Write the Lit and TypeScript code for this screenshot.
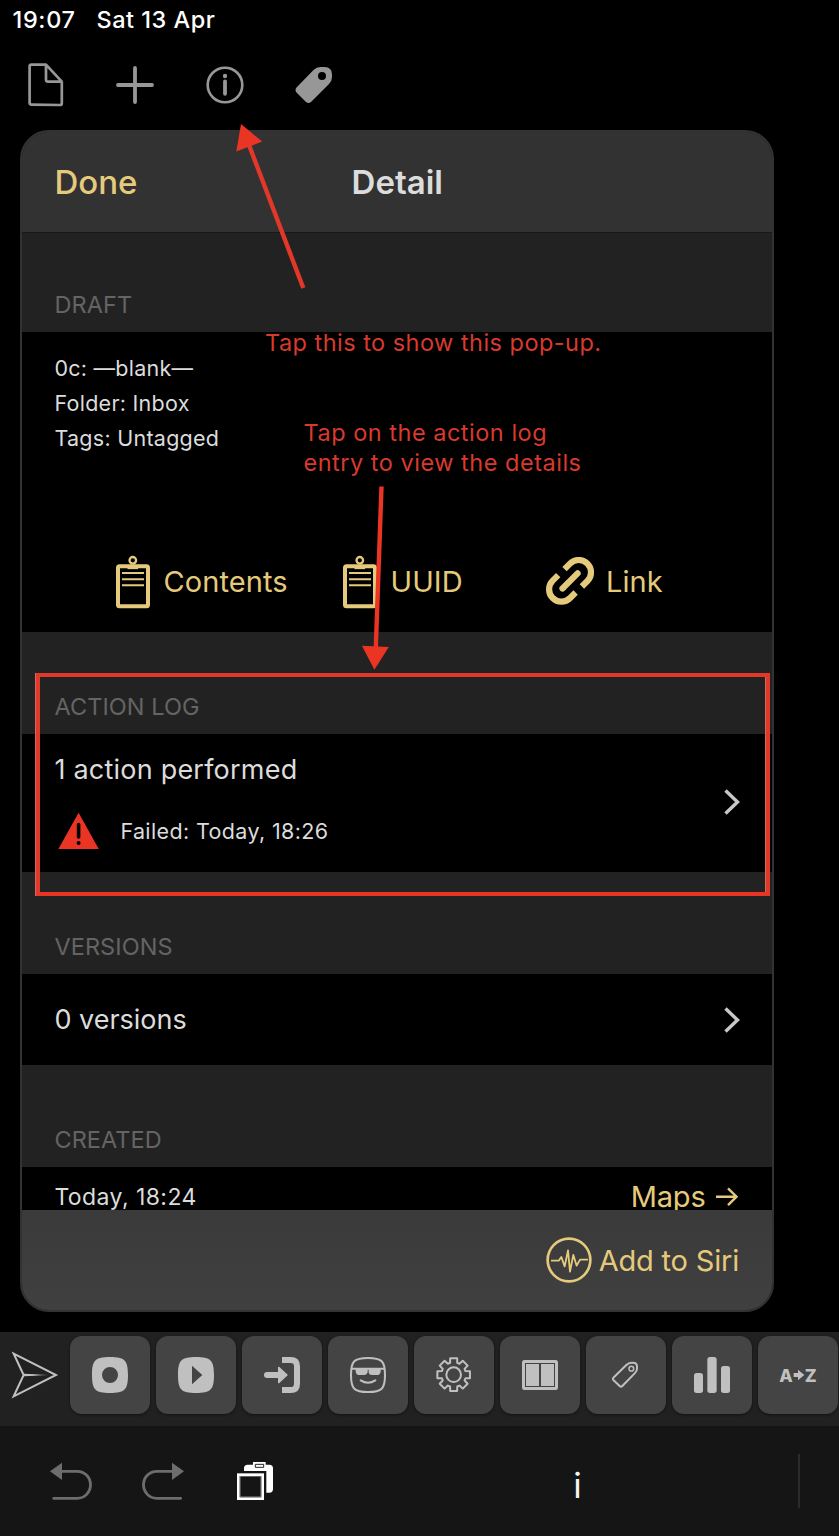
import { LitElement, html, css, svg } from "lit";
import { customElement } from "lit/decorators.js";

const SQUIRCLE = "M0-54C44-54 54-44 54 0S44 54 0 54-54 44-54 0-44-54 0-54Z";

function gearPath(): string {
  const pts: string[] = [];
  for (let i = 0; i < 8; i++) {
    const mid = i * 45 - 90;
    const corners: [number, number][] = [[37, -17], [50, -12], [50, 12], [37, 17]];
    for (const [r, off] of corners) {
      const a = ((mid + off) * Math.PI) / 180;
      pts.push(`${(r * Math.cos(a)).toFixed(1)} ${(r * Math.sin(a)).toFixed(1)}`);
    }
  }
  return "M" + pts.join("L") + "Z";
}

const clipboard = html`<svg class="clip" width="34" height="54" viewBox="116 554.700 34 54" fill="none" stroke="currentColor">
  <rect x="118" y="566" width="30" height="40" rx="1.5" stroke-width="4"></rect>
  <circle cx="132.8" cy="560" r="3.3" stroke-width="2.3"></circle>
  <path d="M127.5 567.6h10.600" stroke-width="2.500"></path>
  <path d="M122 572.8h22M122 579h22M122 585h22" stroke-width="2"></path>
</svg>`;

const chevron = html`<svg class="chev" width="18" height="30" viewBox="723 787 18 30" fill="none" stroke="#c8c8c8" stroke-width="3.4">
  <path d="M725.5 790.5l12 11.500-12 11.500"></path>
</svg>`;

const actionIcons = [
  svg`<path d="${SQUIRCLE}M0-24A24 24 0 1 0 0 24 24 24 0 1 0 0-24Z" fill="currentColor" fill-rule="evenodd"></path>`,
  svg`<path d="${SQUIRCLE}M-12-28V28L19 0Z" fill="currentColor" fill-rule="evenodd"></path>`,
  svg`<path d="M0-45H26Q45-45 45-26V26Q45 45 26 45H0" fill="none" stroke="currentColor" stroke-width="18"></path>
      <path d="M-45 0H-10" stroke="currentColor" stroke-width="18" stroke-linecap="round"></path>
      <path d="M-10-23L15 0-10 23Z" fill="currentColor" stroke="currentColor" stroke-width="4" stroke-linejoin="round"></path>`,
  svg`<path d="${SQUIRCLE}" transform="scale(.945)" fill="none" stroke="currentColor" stroke-width="6.5"></path>
      <path d="M-49-19H49" stroke="currentColor" stroke-width="6"></path>
      <path d="M-37-21H-1V-8Q-3 0-10 0H-26Q-35 0-37-10ZM2-21H38V-10Q36 0 27 0H11Q3 0 2-8Z" fill="currentColor"></path>
      <path d="M-22 16Q0 30 22 16" fill="none" stroke="currentColor" stroke-width="6" stroke-linecap="round"></path>`,
  svg`<g transform="translate(-1 -1)" fill="none" stroke="currentColor" stroke-width="6" stroke-linejoin="round">
      <path d="${gearPath()}"></path><circle r="22"></circle></g>`,
  svg`<rect x="-49.500" y="-40.500" width="99" height="81" rx="3" fill="none" stroke="currentColor" stroke-width="9"></rect>
      <path d="M-42-33H-3V33H-42ZM3-33H42V33H3Z" fill="currentColor"></path>`,
  svg`<g fill="none" stroke="currentColor" stroke-width="6" stroke-linejoin="round">
      <path d="M-38 8L1-30Q8-37 16-37H21Q33-37 33-25V-19Q33-12 26-5L-11 33Q-15 37-19 33L-38 15Q-41 11-38 8Z"></path>
      <circle cx="16" cy="-19" r="7" stroke-width="4.500"></circle></g>`,
  svg`<g fill="currentColor"><rect x="-54" y="-6" width="27" height="60" rx="8"></rect>
      <rect x="-14" y="-54" width="28" height="108" rx="8"></rect><rect x="27" y="-27" width="27" height="81" rx="8"></rect></g>`,
];

@customElement("app-root")
export class AppRoot extends LitElement {
  static styles = css`
    :host {
      display: block;
      position: relative;
      width: 839px;
      height: 1536px;
      overflow: hidden;
      background: #000;
      color: #dcdcdc;
      font-family: Inter, "Liberation Sans", sans-serif;
      white-space: nowrap;
    }
    * { box-sizing: border-box; }
    svg { display: block; flex: none; }
    .page { display: flex; flex-direction: column; height: 100%; }
    .status {
      height: 40px; padding-left: 12.5px; display: flex; gap: 21px;
      color: #fff; font-size: 23.5px; line-height: 40px; font-weight: 500;
    }
    .time { letter-spacing: 0.65px; }
    .date { letter-spacing: 0.5px; }
    .tools { height: 90px; display: flex; color: #979797; padding-top: 20px; }
    .panel {
      margin-left: 20px; width: 754px; height: 1182px;
      border: 2px solid #323232; border-radius: 29px; overflow: hidden;
      display: flex; flex-direction: column; background: #222;
    }
    .head {
      height: 101px; flex: none; background: #323232; border-bottom: 1px solid #191919;
      display: grid; grid-template-columns: 1fr auto 1fr; align-items: center;
      padding: 0 32px 0 32.5px; font-size: 33px; line-height: 40px; font-weight: 600;
    }
    .gold { color: #e5ca7c; }
    .done { font-weight: 550; }
    .caption {
      height: 102px; flex: none; display: flex; align-items: flex-end; padding: 0 32.4px 12px;
      color: #646464; font-size: 23.5px; line-height: 30px; letter-spacing: 0.08px;
    }
    .caption.first { height: 99px; }
    .block { background: #000; flex: none; }
    .draft { height: 300px; padding-top: 19px; display: flex; flex-direction: column; }
    .meta { padding-left: 32.4px; font-size: 21.5px; line-height: 35px; letter-spacing: 0.27px; }
    .links {
      margin-top: 95px; padding-left: 94px; display: grid; height: 62px;
      grid-template-columns: 227px 203px auto; justify-content: start; align-items: center;
      font-size: 29px; line-height: 40px; letter-spacing: 0.1px;
    }
    .link { display: flex; align-items: center; gap: 13.5px; }
    .link.wide { gap: 12px; }
    .log { height: 138px; padding: 0 31px 0 32.4px; display: flex; justify-content: space-between; align-items: flex-start; }
    .log .entry { padding-top: 18px; }
    .log .chev { margin-top: 53px; }
    .title { font-size: 27px; line-height: 36px; letter-spacing: 0.22px; }
    .title.short { letter-spacing: 0; }
    .fail { display: flex; align-items: center; gap: 21px; margin-top: 24px; padding-left: 4px; font-size: 21.5px; line-height: 38px; letter-spacing: 0.37px; }
    .row { height: 91px; padding: 0 31px 0 32.4px; display: flex; justify-content: space-between; align-items: center; }
    .created { height: 43px; padding: 9px 34px 0 32.4px; display: flex; justify-content: space-between; overflow: hidden; line-height: 40px; }
    .when { font-size: 23px; letter-spacing: 0.43px; line-height: 42px; }
    .maps { display: flex; gap: 9.5px; font-size: 29px; align-items: center; height: 42px; letter-spacing: -0.2px; }
    .foot {
      flex: 1; background: linear-gradient(#3a3a3a, #404040); display: flex; justify-content: flex-end;
      align-items: center; gap: 7px; padding-right: 33px; font-size: 29px; line-height: 40px; letter-spacing: -0.2px;
    }
    .siri { padding-top: 2px; }
    .actions {
      margin-top: 20px; height: 94px; flex: none; background: #212121; display: flex; gap: 6px;
      padding: 4px 0 0 0; color: #c0c0c0;
    }
    .send { width: 64px; height: 78px; }
    .key {
      width: 80px; height: 78px; flex: none; border-radius: 12px; background: #444;
      box-shadow: 0 1px 3px rgba(0, 0, 0, 0.5); display: flex; align-items: center; justify-content: center;
      font-size: 17.5px; font-weight: 800; gap: 0;
    }
    .bottom { flex: 1; background: #151515; display: flex; color: #6d6d6d; align-items: flex-start; }
    .info { width: 20px; margin-left: 287.5px; color: #f4f4f4; font-size: 35px; line-height: 60px; margin-top: 29px; text-align: center; }
    .divider { width: 2px; height: 54px; margin: 28px 0 0 210.5px; background: #2b2b2b; }
    .marks { position: absolute; inset: 0; }
    .note { position: absolute; color: #d83a2d; font-size: 23.500px; line-height: 30px; }
    .note-a { left: 265px; top: 327.500px; letter-spacing: 0.47px; }
    .note-b { left: 303.500px; top: 417.500px; letter-spacing: 0.51px; }
  `;

  render() {
    return html`
      <div class="page">
        <div class="status"><span class="time">19:07</span><span class="date">Sat 13 Apr</span></div>
        <div class="tools">
          <svg width="90" height="50" viewBox="0 60 90 50" fill="none" stroke="currentColor" stroke-width="2.7" stroke-linejoin="round">
            <path d="M46 64.700H31.500Q29.600 64.700 29.600 66.600V102.800Q29.600 104.600 31.500 104.600L60 105Q61.800 105 61.800 103.200V81.600L46 64.700V79.800Q46 81.600 47.800 81.600H61.800"></path>
          </svg>
          <svg width="90" height="50" viewBox="90 60 90 50" fill="none" stroke="currentColor" stroke-width="3.8" stroke-linecap="round">
            <path d="M118 85H152M135 68V102"></path>
          </svg>
          <svg width="90" height="50" viewBox="180 60 90 50" fill="none" stroke="currentColor">
            <circle cx="225" cy="85" r="17.3" stroke-width="2.6"></circle>
            <circle cx="225" cy="76" r="2.200" fill="currentColor" stroke="none"></circle>
            <path d="M225 81.500V93.800" stroke-width="3.800" stroke-linecap="round"></path>
          </svg>
          <svg width="90" height="50" viewBox="270 60 90 50" fill="currentColor">
            <path fill-rule="evenodd" d="M296.500 87.500L313.500 70Q316.500 67 320.500 67H324.500Q332 67 332 74.500V77Q332 81 329 84L311 102Q308.500 104 306 102L296.500 92.500Q294.500 90 296.500 87.500ZM322 72A4 4 0 1 0 322 80A4 4 0 1 0 322 72Z"></path>
          </svg>
        </div>

        <div class="panel">
          <div class="head"><span class="gold done">Done</span><span>Detail</span></div>
          <div class="caption first"><span>DRAFT</span></div>
          <div class="block draft">
            <div class="meta">0c: —blank—</div>
            <div class="meta">Folder: Inbox</div>
            <div class="meta">Tags: Untagged</div>
            <div class="links gold">
              <div class="link">${clipboard}<span>Contents</span></div>
              <div class="link">${clipboard}<span>UUID</span></div>
              <div class="link wide">
                <svg width="48" height="50" viewBox="546 557 48 50" fill="none" stroke="currentColor" stroke-width="6.200">
                  <path d="M564.500 569.100L570 563.600A12.300 12.300 0 1 1 587.400 581L581.900 586.500"></path>
                  <path d="M575.600 592.500L570.100 598A12.300 12.300 0 1 1 552.700 580.600L558.200 575.100"></path>
                  <path d="M562.500 588.500L577.600 573.400" stroke-linecap="round"></path>
                </svg><span>Link</span>
              </div>
            </div>
          </div>
          <div class="caption"><span>ACTION LOG</span></div>
          <div class="block log">
            <div class="entry">
              <div class="title">1 action performed</div>
              <div class="fail">
                <svg width="41" height="38" viewBox="58.400 812 41 38">
                  <path d="M79 812.700L99.200 849H58.800Z" fill="#ea3424"></path>
                  <path d="M79 824.500V837" stroke="#000" stroke-width="3.600" stroke-linecap="round"></path>
                  <circle cx="79" cy="843" r="2"></circle>
                </svg><span>Failed: Today, 18:26</span>
              </div>
            </div>
            ${chevron}
          </div>
          <div class="caption"><span>VERSIONS</span></div>
          <div class="block row"><span class="title short">0 versions</span>${chevron}</div>
          <div class="caption"><span>CREATED</span></div>
          <div class="block created">
            <span class="when">Today, 18:24</span>
            <span class="maps gold">Maps
              <svg width="23" height="20" viewBox="715 1187 23 20" fill="none" stroke="currentColor" stroke-width="2.400">
                <path d="M716 1196.700H736.500M728 1188.300L736.500 1196.700 728 1205.100"></path>
              </svg></span>
          </div>
          <div class="foot gold">
            <svg width="46" height="46" viewBox="78 231 138 138" fill="none" stroke="currentColor">
              <circle cx="147" cy="300" r="64" stroke-width="8"></circle>
              <path d="M93 302H116L124 291 134 319 144 271 150 335 160 285 170 317 180 299H204" stroke-width="5.500" stroke-linejoin="round"></path>
            </svg><span class="siri">Add to Siri</span>
          </div>
        </div>

        <div class="actions">
          <svg class="send" viewBox="0 33 192 234" fill="none" stroke="currentColor">
            <defs><linearGradient id="fade" gradientUnits="userSpaceOnUse" x1="71" x2="145" y1="0" y2="0">
              <stop offset="0.400" stop-color="#c0c0c0"></stop><stop offset="1" stop-color="#333"></stop></linearGradient></defs>
            <path d="M41 86L168 150 41 214 71 150Z" stroke-width="6"></path>
            <path d="M71 146L145 149.500V150.500L71 154Z" fill="url(#fade)" stroke="none"></path>
          </svg>
          ${actionIcons.map((icon) => html`<div class="key"><svg width="40" height="40" viewBox="-60 -60 120 120">${icon}</svg></div>`)}
          <div class="key"><span>A</span><svg width="12" height="12" viewBox="0 0 36 36"><path d="M2 12H15V2L34 18 15 34V24H2Z" fill="currentColor"></path></svg><span>Z</span></div>
        </div>

        <div class="bottom">
          <svg width="200" height="80" viewBox="0 303 600 240" fill="none" stroke="currentColor" stroke-width="8.500" stroke-linecap="round">
            <path d="M161 520H232A39.500 40.500 0 0 0 232 439H180"></path>
            <path d="M150 439L186 413V465Z" fill="currentColor" stroke="none"></path>
            <path d="M542 520H470A39.500 40.500 0 0 1 470 439H520"></path>
            <path d="M552 439L516 413V465Z" fill="currentColor" stroke="none"></path>
          </svg>
          <svg width="80" height="80" viewBox="600 303 240 240">
            <path d="M732 438V430Q732 419 743 419H808Q819 419 819 430V492Q819 503 808 503H799V438Z" fill="#fff"></path>
            <path d="M759 411H797V430H759Z" fill="#fff"></path>
            <path d="M766 418H791V427H766Z" fill="none" stroke="#222" stroke-width="3"></path>
            <rect x="715" y="449" width="73" height="72" fill="none" stroke="#fff" stroke-width="8"></rect>
            <rect x="720.500" y="454.500" width="62" height="61" fill="none" stroke="#8a8a8a" stroke-width="2"></rect>
          </svg>
          <span class="info">i</span>
          <span class="divider"></span>
        </div>
      </div>

      <svg class="marks" width="839" height="1536" viewBox="0 0 839 1536">
        <g fill="#ea3424">
          <path d="M241 124L262.200 141.500 236.300 151.500Z"></path>
          <path d="M381.500 486.500L375.800 648" stroke="#ea3424" stroke-width="4.400"></path>
          <path d="M374.400 669.800L361.900 645.700 388.800 647Z"></path>
          <path d="M249 145L303.300 288" stroke="#e23729" stroke-width="4.400"></path>
        </g>
        <path d="M35 675H770" stroke="#de392b" stroke-width="4"></path>
        <path d="M35 894H770" stroke="#ea3424" stroke-width="4"></path>
        <path d="M37.500 673V896M767.500 673V896" stroke="#de392b" stroke-width="5"></path>
        <path d="M35.500 673V896M765.500 677V892" stroke="#cf6a60" stroke-width="1"></path>
      </svg>
      <div class="note note-a">Tap this to show this pop-up.</div>
      <div class="note note-b">Tap on the action log<br />entry to view the details</div>
    `;
  }
}
